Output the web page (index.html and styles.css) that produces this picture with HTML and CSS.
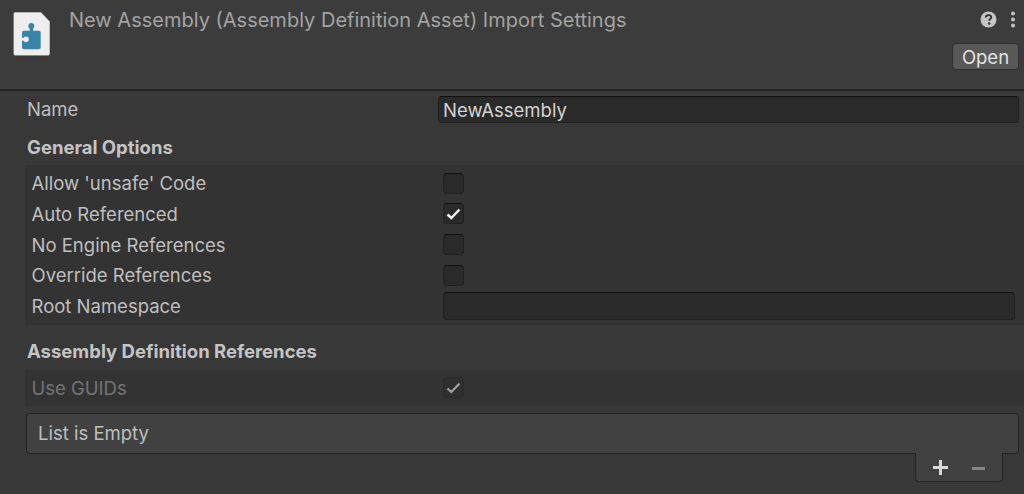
FILE: index.html
```html
<!DOCTYPE html>
<html lang="en">
<head>
<meta charset="utf-8">
<title>New Assembly Import Settings</title>
<link rel="stylesheet" href="styles.css">
</head>
<body>
<header class="header">
  <svg class="asset-icon" width="40" height="46" viewBox="0 0 40 46">
    <path d="M3 1H29L38 10.500V42.700Q38 44.700 36 44.700H3.300Q1.300 44.700 1.300 42.700V3Q1.300 1 3 1Z" fill="#eeeeee" stroke="#2a2a2a" stroke-width="0.5"/>
    <g fill="#3b84a9">
      <rect x="10" y="19.700" width="18.700" height="18.600" rx="1.800"/>
      <rect x="17.700" y="16" width="3.400" height="5"/>
      <circle cx="19.300" cy="15" r="3"/>
    </g>
    <circle cx="14" cy="28.300" r="2.800" fill="#eeeeee"/>
    <rect x="9" y="27" width="4" height="2.600" fill="#eeeeee"/>
  </svg>
  <h1 class="title">New Assembly (Assembly Definition Asset) Import Settings</h1>
  <div class="header-actions">
    <div class="header-icons">
      <svg width="17" height="17" viewBox="0 0 17 17"><circle cx="8.500" cy="8.500" r="8" fill="#c4c4c4"/><path d="M5.800 6.500C5.900 4.900 7 4.100 8.500 4.100C10.100 4.100 11.200 5 11.200 6.300C11.200 7.900 9.200 8 9.200 9.800" fill="none" stroke="#333" stroke-width="1.900"/><circle cx="9.100" cy="12.500" r="1.200" fill="#333"/></svg>
      <svg width="6" height="17" viewBox="0 0 6 17"><circle cx="3" cy="2.500" r="2" fill="#c4c4c4"/><circle cx="3" cy="8.500" r="2" fill="#c4c4c4"/><circle cx="3" cy="14.500" r="2" fill="#c4c4c4"/></svg>
    </div>
    <button class="open-btn">Open</button>
  </div>
</header>
<main class="content">
  <div class="name-row">
    <span class="name-label">Name</span>
    <div class="name-field">NewAssembly</div>
  </div>
  <h2 class="section-title general">General Options</h2>
  <section class="panel options">
    <div class="row"><span>Allow 'unsafe' Code</span><span class="check"></span></div>
    <div class="row"><span>Auto Referenced</span><span class="check"><svg width="15" height="12" viewBox="0 0 15 12"><path d="M1.500 6.500L5.300 10L13.500 1.500" fill="none" stroke="#f2f2f2" stroke-width="2.400"/></svg></span></div>
    <div class="row"><span>No Engine References</span><span class="check"></span></div>
    <div class="row"><span>Override References</span><span class="check"></span></div>
    <div class="row"><span>Root Namespace</span><span class="text-field"></span></div>
  </section>
  <h2 class="section-title refs">Assembly Definition References</h2>
  <section class="panel guids">
    <div class="row disabled"><span>Use GUIDs</span><span class="check dim"><svg width="15" height="12" viewBox="0 0 15 12"><path d="M1.500 6.500L5.300 10L13.500 1.500" fill="none" stroke="#a4a4a4" stroke-width="2"/></svg></span></div>
  </section>
  <div class="list-box">List is Empty</div>
  <div class="list-footer">
    <svg width="17" height="17" viewBox="0 0 17 17"><path d="M8.500 1V16M1 8.500H16" stroke="#d8d8d8" stroke-width="3"/></svg>
    <svg class="minus" width="13" height="3" viewBox="0 0 13 3"><path d="M0 1.500H13" stroke="#858585" stroke-width="3"/></svg>
  </div>
</main>
</body>
</html>
```
FILE: styles.css
```css
* { box-sizing: border-box; }
html, body { margin: 0; height: 100%; }
body {
  width: 1024px;
  height: 494px;
  overflow: hidden;
  background: #383838;
  color: #bfbfbf;
  font-family: Inter, "Liberation Sans", sans-serif;
  font-size: 18.5px;
}
.header {
  display: flex;
  height: 91px;
  padding: 11px 5px 0 12px;
  background: #3c3c3c;
  border-bottom: 2px solid #232323;
}
.asset-icon { flex: none; margin-right: 17px; }
.title {
  flex: 1;
  margin: 0;
  font-size: 20px;
  font-weight: 400;
  line-height: 18px;
  color: #a3a3a3;
}
.header-actions {
  display: flex;
  flex-direction: column;
  align-items: flex-end;
  gap: 15px;
}
.header-icons { display: flex; align-items: center; gap: 13px; padding-right: 3px; }
.open-btn {
  width: 67px;
  height: 27px;
  padding: 0;
  border: 1px solid #2f2f2f;
  border-radius: 4px;
  background: #585858;
  color: #e4e4e4;
  font: 18.5px Inter, "Liberation Sans", sans-serif;
}
.content { padding: 5px 5px 0 25px; }
.name-row { display: flex; align-items: center; height: 27px; padding-left: 2px; }
.name-label { width: 411px; padding-bottom: 2px; }
.name-field {
  flex: 1;
  height: 27px;
  padding-left: 4px;
  line-height: 26px;
  color: #d2d2d2;
  background: #2a2a2a;
  border: 1px solid #212121;
  border-top-color: #0f0f0f;
  border-radius: 4px;
}
.section-title {
  margin: 0;
  padding-left: 2px;
  font-size: 18.5px;
  font-weight: 700;
  color: #c4c4c4;
  line-height: 22px;
}
.general { margin: 13px 0 7px; }
.refs { margin: 15px 0 8px; }
.panel { background: #333333; margin-right: -5px; }
.options { height: 160px; padding: 2.700px 9px 0 6.500px; }
.guids { height: 36px; padding: 2.500px 9px 0 6.500px; }
.row { display: flex; align-items: center; height: 30.750px; }
.row > span:first-child { width: 411.500px; }
.disabled { color: #737373; }
.check {
  display: flex;
  align-items: center;
  justify-content: center;
  width: 21px;
  height: 21px;
  background: #2a2a2a;
  border: 1px solid #212121;
  border-top-color: #0f0f0f;
  border-radius: 4px;
}
.check.dim { background: #2f2f2f; border-color: #2a2a2a; }
.text-field {
  flex: 1;
  height: 28px;
  background: #2a2a2a;
  border: 1px solid #212121;
  border-top-color: #0f0f0f;
  border-radius: 4px;
}
.list-box {
  height: 41px;
  margin: 7px 0 0 1px;
  padding-left: 11px;
  line-height: 38px;
  background: #414141;
  border: 1px solid #232323;
  border-radius: 4px;
}
.list-footer {
  display: flex;
  align-items: center;
  gap: 23px;
  width: 88px;
  height: 29px;
  margin: -1px 0 0 890px;
  padding-left: 16px;
  background: #414141;
  border: 1px solid #232323;
  border-top: 0;
  border-radius: 0 0 4px 4px;
}
.minus { margin-top: 2px; }
```
